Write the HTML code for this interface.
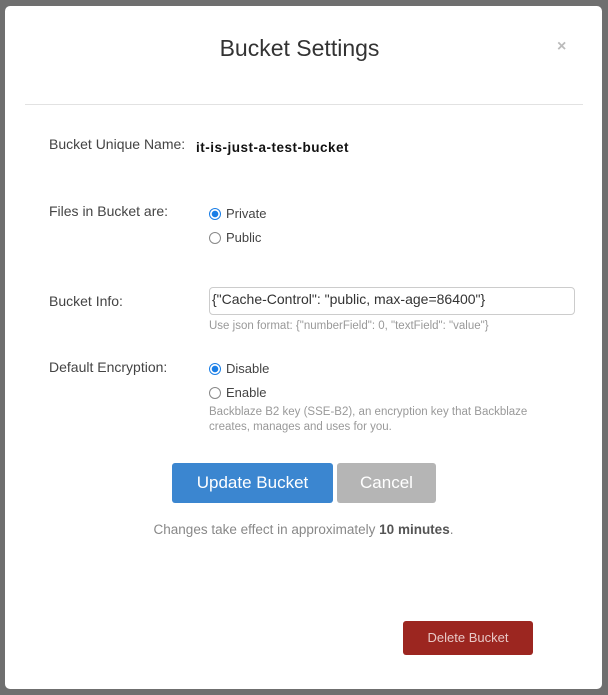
<!DOCTYPE html>
<html><head><style>
body{margin:0;width:608px;height:695px;background:#6f6f6f;font-family:"Liberation Sans",sans-serif;position:relative;overflow:hidden}
.m{position:absolute;left:5px;top:6px;width:597px;height:683px;background:#fff;border-radius:5px}
.a{position:absolute;white-space:nowrap}
.t{left:-4px;width:597px;text-align:center;top:29px;font-size:23px;color:#333}
.lbl{font-size:14px;color:#444;left:44px}
.r{font-size:13px;color:#444}
.rad{position:absolute;width:10px;height:10px;border:1.5px solid #888;border-radius:50%}
.rad.on{border:1.5px solid #1a7ee6;background:radial-gradient(#1a7ee6 0 3px,#fff 3.5px)}
.h{font-size:11.5px;color:#999}
.btn{position:absolute;border-radius:3px;color:#fff;text-align:center;font-size:17px}
</style></head><body>
<div class="m">
<div class="a t">Bucket Settings</div>
<div class="a" style="left:552px;top:32px;color:#bbb;font-size:16px;font-weight:bold">×</div>
<div style="position:absolute;left:20px;width:558px;top:98px;height:1px;background:#e2e2e2"></div>
<div class="a lbl" style="top:130px">Bucket Unique Name:</div>
<div class="a" style="left:191px;top:134px;font-size:13.5px;font-weight:bold;color:#111;letter-spacing:0.5px">it-is-just-a-test-bucket</div>
<div class="a lbl" style="top:197px">Files in Bucket are:</div>
<div class="rad on" style="left:204px;top:202px"></div><div class="a r" style="left:221px;top:200px">Private</div>
<div class="rad" style="left:204px;top:226px"></div><div class="a r" style="left:221px;top:224px">Public</div>
<div class="a lbl" style="top:287px">Bucket Info:</div>
<div style="position:absolute;left:204px;top:281px;width:364px;height:26px;border:1px solid #ccc;border-radius:4px"></div>
<div class="a r" style="left:207px;top:285px;color:#333;font-size:14px">{"Cache-Control": "public, max-age=86400"}</div>
<div class="a h" style="left:204px;top:314px">Use json format: {"numberField": 0, "textField": "value"}</div>
<div class="a lbl" style="top:353px">Default Encryption:</div>
<div class="rad on" style="left:204px;top:357px"></div><div class="a r" style="left:221px;top:355px">Disable</div>
<div class="rad" style="left:204px;top:381px"></div><div class="a r" style="left:221px;top:379px">Enable</div>
<div class="a h" style="left:204px;top:399px;line-height:15px">Backblaze B2 key (SSE-B2), an encryption key that Backblaze<br>creates, manages and uses for you.</div>
<div class="btn" style="left:167px;top:457px;width:161px;height:40px;line-height:40px;background:#3b86d0">Update Bucket</div>
<div class="btn" style="left:332px;top:457px;width:99px;height:40px;line-height:40px;background:#b5b5b5">Cancel</div>
<div class="a" style="left:0;width:597px;text-align:center;top:516px;font-size:13.5px;color:#888">Changes take effect in approximately <b style="color:#555">10 minutes</b>.</div>
<div class="btn" style="left:398px;top:615px;width:130px;height:34px;line-height:34px;background:#9c2620;font-size:13px;color:#e8c8c6">Delete Bucket</div>
</div>
</body></html>
